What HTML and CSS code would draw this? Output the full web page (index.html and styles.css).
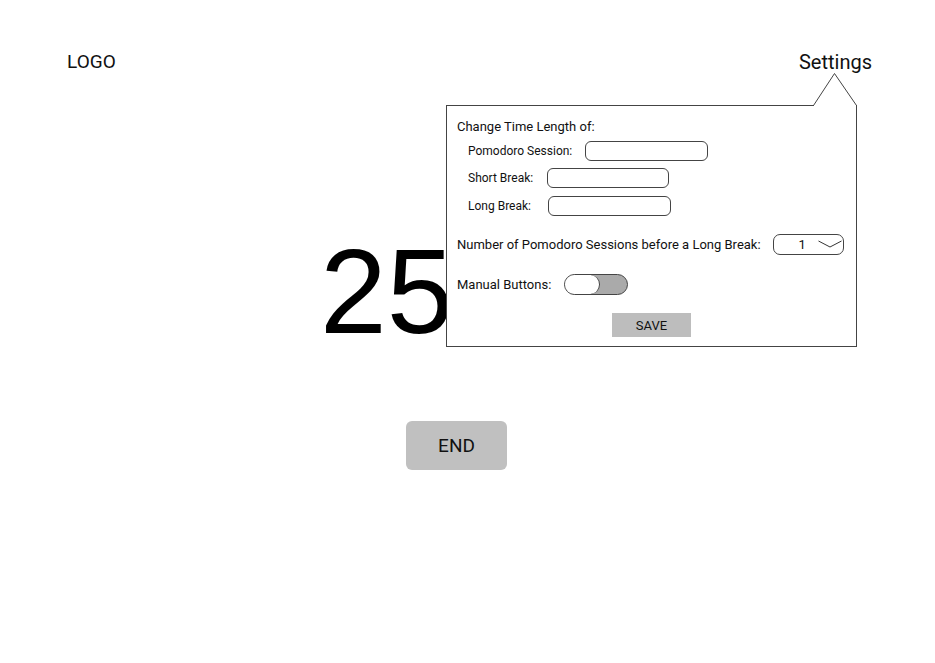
FILE: index.html
```html
<!DOCTYPE html>
<html lang="en">
<head>
<meta charset="utf-8">
<title>Pomodoro</title>
<link rel="stylesheet" href="styles.css">
</head>
<body>
<div class="page">
  <header class="header">
    <div class="logo">LOGO</div>
    <div class="settings-link">Settings</div>
  </header>
  <main class="main">
    <div class="timer">25:00</div>
    <button class="end-btn">END</button>
  </main>

  <section class="panel">
    <svg class="pointer" width="46" height="36" viewBox="0 0 46 36">
      <polygon points="2,33 22.5,2 44,33 44,35.5 2,35.5" fill="#fff"/>
      <polyline points="1.5,33.5 22.5,1.5 44.5,33.5" fill="none" stroke="#444" stroke-width="1"/>
    </svg>
    <div class="panel-title">Change Time Length of:</div>
    <div class="field-row r1"><span class="sub-label">Pomodoro Session:</span><span class="input"></span></div>
    <div class="field-row r2"><span class="sub-label">Short Break:</span><span class="input"></span></div>
    <div class="field-row r3"><span class="sub-label">Long Break:</span><span class="input"></span></div>
    <div class="opt-row r4">
      <span class="opt-label">Number of Pomodoro Sessions before a Long Break:</span>
      <span class="select"><span class="select-val">1</span>
        <svg class="chev" width="24" height="10" viewBox="0 0 24 10"><polyline points="0.5,2 12,8 23.5,2" fill="none" stroke="#333" stroke-width="1"/></svg>
      </span>
    </div>
    <div class="opt-row r5">
      <span class="opt-label">Manual Buttons:</span>
      <span class="toggle"><span class="knob"></span></span>
    </div>
    <div class="save-row"><button class="save-btn">SAVE</button></div>
  </section>
</div>
</body>
</html>
```
FILE: styles.css
```css
* { box-sizing: border-box; }
html, body { margin: 0; padding: 0; background: #fff; }
body { font-family: Roboto, "Liberation Sans", sans-serif; color: #111; }
.page { position: relative; width: 935px; height: 663px; overflow: hidden; }

.header {
  display: flex;
  justify-content: space-between;
  align-items: center;
  padding: 50px 63px 0 67px;
  height: 74px;
}
.logo { font-size: 19px; line-height: 24px; }
.settings-link { font-size: 20px; line-height: 24px; }

.main {
  display: flex;
  flex-direction: column;
  align-items: flex-start;
  padding-top: 157px;
}
.timer {
  font-family: "Liberation Sans", Arial, sans-serif;
  font-size: 120px;
  line-height: 120px;
  margin-left: 320px;
  color: #000;
}
.end-btn {
  margin-top: 70px;
  margin-left: 406px;
  width: 101px;
  height: 49px;
  border: none;
  border-radius: 6px;
  background: #c0c0c0;
  font-family: Roboto, sans-serif;
  font-size: 19px;
  color: #111;
  padding: 0;
}

.panel {
  position: absolute;
  left: 446px;
  top: 105px;
  width: 411px;
  height: 242px;
  border: 1px solid #444;
  background: #fff;
  padding: 13px 10px 0 10px;
  display: flex;
  flex-direction: column;
}
.pointer { position: absolute; left: 365px; top: -34px; }

.panel-title { font-size: 13px; line-height: 16px; height: 16px; }
.field-row {
  display: flex;
  align-items: center;
  height: 20px;
  padding-left: 11px;
  gap: 13px;
}
.r1 { margin-top: 6px; }
.r2 { margin-top: 7px; }
.r3 { margin-top: 8px; }
.sub-label { font-size: 12px; line-height: 16px; }
.r2 .sub-label { margin-right: 1px; }
.r3 .sub-label { margin-right: 4px; }
.input {
  width: 123px;
  height: 20px;
  border: 1px solid #444;
  border-radius: 6px;
}
.r2 .input { width: 122px; }

.opt-row { display: flex; align-items: center; height: 21px; }
.r4 { margin-top: 18px; gap: 12px; }
.r5 { margin-top: 19px; gap: 13px; }
.opt-label { font-size: 13px; line-height: 16px; }
.select {
  position: relative;
  width: 71px;
  height: 21px;
  border: 1px solid #444;
  border-radius: 7px;
  display: flex;
  align-items: center;
}
.select-val { font-size: 13px; margin-left: 25px; width: 20px; }
.chev { position: absolute; left: 44px; top: 4px; }

.toggle {
  position: relative;
  width: 64px;
  height: 21px;
  border: 1px solid #444;
  border-radius: 11px;
  background: #aaaaaa;
  display: flex;
}
.knob {
  width: 35px;
  height: 19px;
  margin: 0;
  background: #fff;
  border-right: 1px solid #444;
  border-radius: 10px;
}

.save-row { display: flex; justify-content: center; margin-top: 18px; }
.save-btn {
  width: 79px;
  height: 24px;
  border: none;
  background: #bdbdbd;
  font-family: Roboto, sans-serif;
  font-size: 13px;
  color: #111;
  padding: 0;
}
```
